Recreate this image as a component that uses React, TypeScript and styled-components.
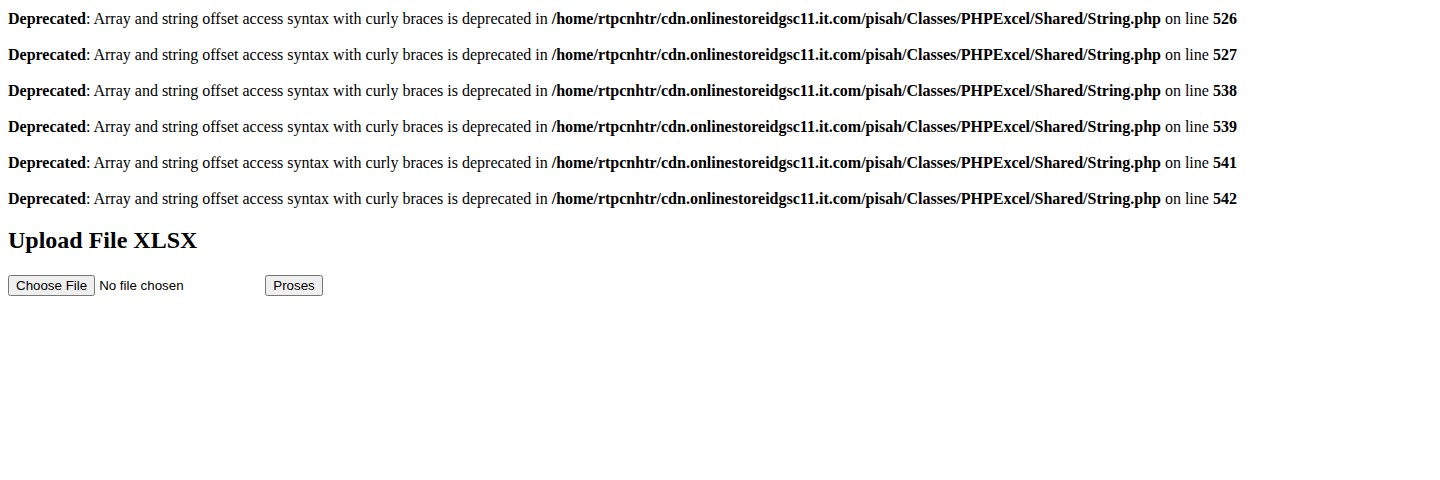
import { createGlobalStyle, styled } from 'styled-components';

const notices = [526, 527, 538, 539, 541, 542];
const path = '/home/rtpcnhtr/cdn.onlinestoreidgsc11.it.com/pisah/Classes/PHPExcel/Shared/String.php';

const App = () => {
  return (
    <>
      <GlobalStyle />
      <StyledLog>
        {notices.map((line) => (
          <StyledNotice key={line}>
            <b>Deprecated</b>: Array and string offset access syntax with curly braces is deprecated in{' '}
            <b>{path}</b> on line <b>{line}</b>
          </StyledNotice>
        ))}
      </StyledLog>
      <StyledTitle>Upload File XLSX</StyledTitle>
      <StyledForm onSubmit={(e) => e.preventDefault()}>
        <StyledFile type="file" name="file" /> <StyledButton type="submit">Proses</StyledButton>
      </StyledForm>
    </>
  );
};

export default App;

const GlobalStyle = createGlobalStyle`
  body {
    margin: 8px;
    background: #ffffff;
    color: #000000;
    font-family: 'Liberation Serif', 'Times New Roman', serif;
    font-size: 16px;
  }
`;
const StyledLog = styled.div`
  display: flex;
  flex-direction: column;
  gap: 18px;

  padding-top: 2px;
`;
const StyledNotice = styled.div`
  line-height: 18px;
  white-space: nowrap;
`;
const StyledTitle = styled.h2`
  margin: 19px 0 21px;
  font-size: 24px;
  line-height: 27px;
  font-weight: bold;
`;
const StyledForm = styled.form`
  line-height: 20px;
`;
const StyledFile = styled.input`
  width: 253px;
  font-family: 'Liberation Sans', Arial, sans-serif;
  font-size: 13.333px;
`;
const StyledButton = styled.button`
  width: 58px;
  font-family: 'Liberation Sans', Arial, sans-serif;
  font-size: 13.333px;
`;
